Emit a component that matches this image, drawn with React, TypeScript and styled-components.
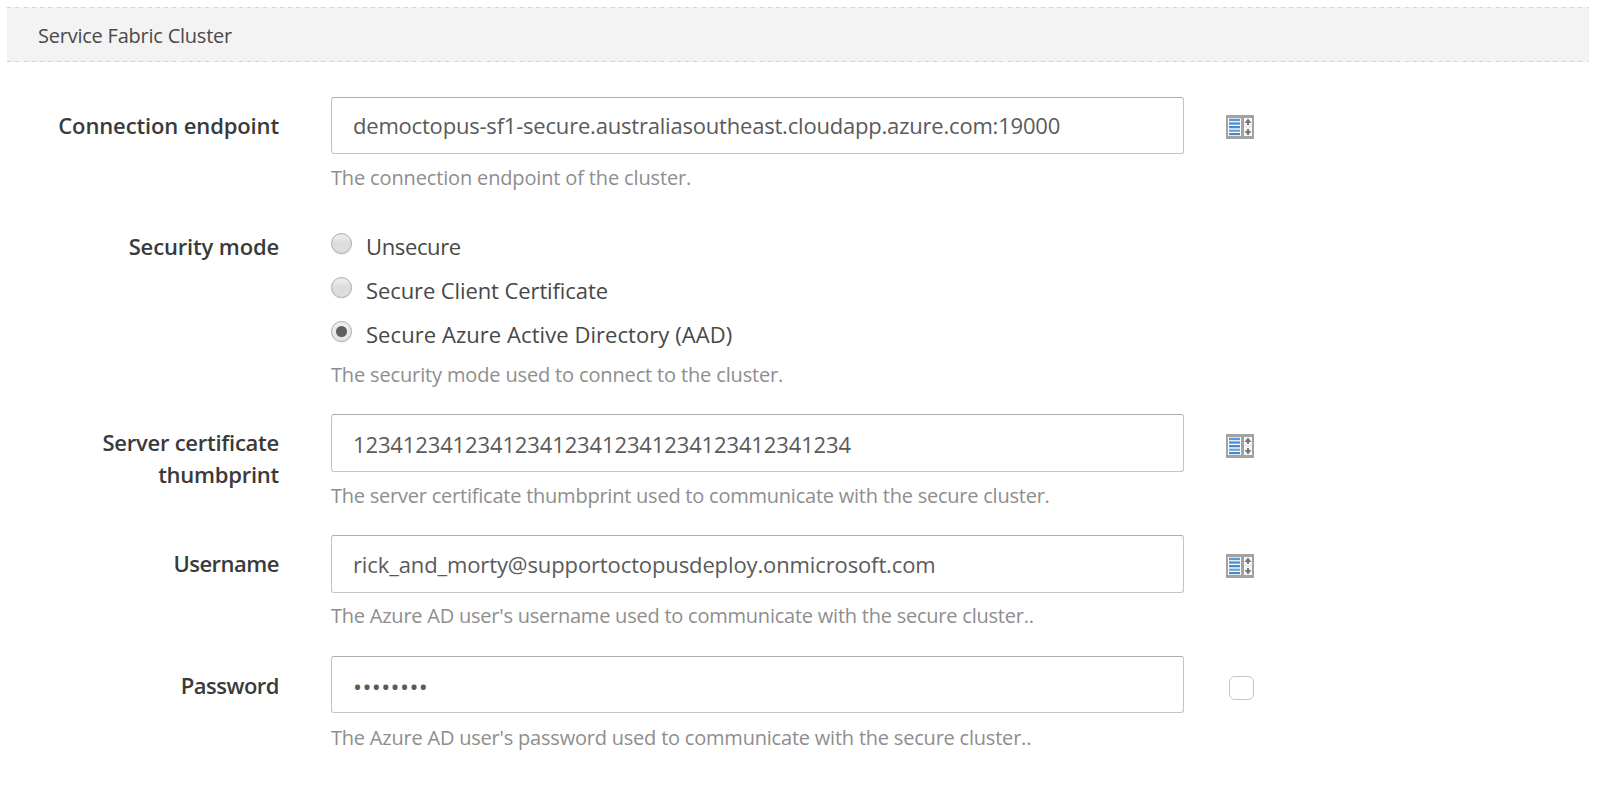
import React from 'react';
import styled, { createGlobalStyle } from 'styled-components';

const GlobalStyle = createGlobalStyle`
  *, *::before, *::after { box-sizing: border-box; }
  body {
    margin: 0;
    background: #fff;
    font-family: 'Open Sans', 'Noto Sans', sans-serif;
    font-size: 22px;
    color: #333;
  }
`;

const dashes = 'repeating-linear-gradient(90deg, #d6d6d6 0 4px, #f3f3f3 4px 8.27px)';

const Page = styled.main`
  width: 1600px;
  height: 802px;
  padding: 7px 11px 0 7px;
  overflow: hidden;
`;

const SectionHeader = styled.header`
  height: 55px;
  padding: 2px 31px 0;
  display: flex;
  align-items: center;
  font-size: 20px;
  line-height: 28px;
  letter-spacing: -0.23px;
  color: #4a4a4a;
  background: ${dashes} 0 0 / 100% 1px no-repeat, ${dashes} 0 100% / 100% 1px no-repeat, #f3f3f3;
`;

const Form = styled.form`
  padding-top: 35px;
`;

const Row = styled.div<{ $height: number }>`
  display: grid;
  grid-template-columns: 272px 853px 60px;
  column-gap: 52px;
  height: ${(p) => p.$height}px;
`;

const Label = styled.label<{ $top?: number; $tracking?: number }>`
  padding-top: ${(p) => p.$top ?? 12}px;
  padding-left: 40px;
  text-align: right;
  font-weight: 600;
  line-height: 32px;
  letter-spacing: ${(p) => p.$tracking ?? 0}px;
  color: #3a3a3a;
`;

const Field = styled.div`
  display: flex;
  flex-direction: column;
`;

const TextBox = styled.div<{ $height?: number; $tracking?: number; $lift?: number; $drop?: number }>`
  display: flex;
  align-items: center;
  flex: none;
  height: ${(p) => p.$height ?? 57}px;
  padding: ${(p) => p.$drop ?? 0}px 21px ${(p) => p.$lift ?? 0}px;
  border: 1px solid #c4c4c4;
  border-top-color: #adadad;
  border-radius: 3px;
  letter-spacing: ${(p) => p.$tracking ?? 0}px;
  line-height: 32px;
  white-space: nowrap;
  color: #5a5a5a;
`;

const Mask = styled.span`
  padding-top: 4px;
  font-size: 24px;
  letter-spacing: 0.38px;
`;

const Help = styled.p<{ $gap?: number; $tracking?: number }>`
  margin: ${(p) => p.$gap ?? 11}px 0 0;
  font-size: 20px;
  line-height: 28px;
  letter-spacing: ${(p) => p.$tracking ?? -0.15}px;
  white-space: nowrap;
  color: #8e8e8e;
`;

const RadioOption = styled.label<{ $tracking?: number }>`
  display: flex;
  align-items: center;
  gap: 14px;
  height: 44px;
  line-height: 32px;
  letter-spacing: ${(p) => p.$tracking ?? 0}px;
  color: #484848;
`;

const RadioDisc = styled.span<{ $checked?: boolean }>`
  display: flex;
  align-items: center;
  justify-content: center;
  width: 21px;
  height: 21px;
  margin-bottom: 5px;
  border: 1px solid #a9a9a9;
  border-radius: 50%;
  background: ${(p) =>
    p.$checked
      ? 'linear-gradient(#eeeeee, #e4e4e4)'
      : 'linear-gradient(#eaeaea 0 20%, #dddddd 42% 100%)'};
  box-shadow: 0 1px 1px rgba(0, 0, 0, 0.08);

  &::after {
    content: '';
    width: 11px;
    height: 11px;
    border-radius: 50%;
    background: ${(p) => (p.$checked ? '#5f5f5f' : 'transparent')};
  }
`;

const Addon = styled.div<{ $height?: number }>`
  display: flex;
  align-items: center;
  height: ${(p) => p.$height ?? 60}px;
  margin-left: -10px;
`;

const BindCheckbox = styled.span`
  width: 25px;
  height: 24px;
  margin: 3px 0 0 3px;
  border: 1.5px solid #c6c6c6;
  border-radius: 6px;
`;

const VariableIcon = () => (
  <svg width="28" height="24" viewBox="0 0 28 24" aria-hidden="true">
    <rect width="28" height="24" fill="#a3a3a3" />
    <rect x="2" y="3" width="13" height="18" fill="#fff" />
    <rect x="18" y="3" width="8" height="18" fill="#f8f8f8" />
    <rect x="3" y="3.7" width="11" height="2.5" fill="#5e9ad6" />
    <rect x="3" y="7.4" width="11" height="2.3" fill="#4c8dd0" />
    <rect x="3" y="11" width="11" height="2.3" fill="#4c89cb" />
    <rect x="3" y="14.6" width="11" height="2.3" fill="#6ba5da" />
    <rect x="3" y="18" width="11" height="2.2" fill="#4c85c4" />
    <rect x="18" y="11" width="8" height="1.6" fill="#e9e9e9" />
    <path d="M22 3.5l3.5 4.5h-2.5v2h-2V8H18.500z" fill="#777" />
    <path d="M22 20.500l3.500-4.500h-2.500v-2h-2v2H18.500z" fill="#777" />
  </svg>
);

export default function App() {
  return (
    <Page>
      <GlobalStyle />
      <SectionHeader>Service Fabric Cluster</SectionHeader>
      <Form>
        <Row $height={127}>
          <Label $tracking={-0.13}>Connection endpoint</Label>
          <Field>
            <TextBox $tracking={-0.2} $lift={2}>
              democtopus-sf1-secure.australiasoutheast.cloudapp.azure.com:19000
            </TextBox>
            <Help $gap={10.4}>The connection endpoint of the cluster.</Help>
          </Field>
          <Addon><VariableIcon /></Addon>
        </Row>
        <Row $height={190}>
          <Label $top={6} $tracking={-0.15}>Security mode</Label>
          <Field>
            <RadioOption $tracking={-0.37}><RadioDisc />Unsecure</RadioOption>
            <RadioOption $tracking={-0.1}><RadioDisc />Secure Client Certificate</RadioOption>
            <RadioOption $tracking={0.06}><RadioDisc $checked />Secure Azure Active Directory (AAD)</RadioOption>
            <Help $gap={5}>The security mode used to connect to the cluster.</Help>
          </Field>
        </Row>
        <Row $height={121}>
          <Label $tracking={-0.25}>Server certificate thumbprint</Label>
          <Field>
            <TextBox $height={58} $tracking={-0.13} $drop={1}>
              1234123412341234123412341234123412341234
            </TextBox>
            <Help $gap={10} $tracking={-0.23}>
              The server certificate thumbprint used to communicate with the secure cluster.
            </Help>
          </Field>
          <Addon $height={63}><VariableIcon /></Addon>
        </Row>
        <Row $height={121}>
          <Label $tracking={-0.5}>Username</Label>
          <Field>
            <TextBox $height={58} $tracking={-0.12}>
              rick_and_morty@supportoctopusdeploy.onmicrosoft.com
            </TextBox>
            <Help $gap={9} $tracking={-0.23}>
              The Azure AD user's username used to communicate with the secure cluster..
            </Help>
          </Field>
          <Addon $height={62}><VariableIcon /></Addon>
        </Row>
        <Row $height={120}>
          <Label $top={13} $tracking={-0.5}>Password</Label>
          <Field>
            <TextBox><Mask>••••••••</Mask></TextBox>
            <Help $tracking={-0.21}>
              The Azure AD user's password used to communicate with the secure cluster..
            </Help>
          </Field>
          <Addon><BindCheckbox /></Addon>
        </Row>
      </Form>
    </Page>
  );
}
